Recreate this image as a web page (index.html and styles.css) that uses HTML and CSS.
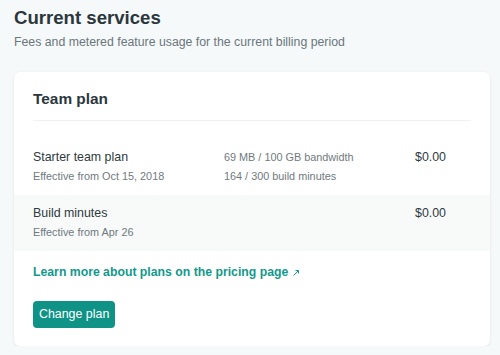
FILE: index.html
```html
<!DOCTYPE html>
<html>
<head>
<meta charset="utf-8">
<link rel="stylesheet" href="styles.css">
</head>
<body>
  <h1 class="title">Current services</h1>
  <p class="subtitle">Fees and metered feature usage for the current billing period</p>
  <section class="card">
    <h2 class="card-title">Team plan</h2>
    <div class="rows">
      <div class="row">
        <div class="col">
          <div class="name">Starter team plan</div>
          <div class="meta">Effective from Oct 15, 2018</div>
        </div>
        <div class="col usage">
          <div>69 MB / 100 GB bandwidth</div>
          <div class="second">164 / 300 build minutes</div>
        </div>
        <div class="price">$0.00</div>
      </div>
      <div class="row alt">
        <div class="col">
          <div class="name">Build minutes</div>
          <div class="meta">Effective from Apr 26</div>
        </div>
        <div class="col usage"></div>
        <div class="price">$0.00</div>
      </div>
    </div>
    <a class="link" href="#">Learn more about plans on the pricing page <svg class="ext" width="6" height="6" viewBox="0 0 6 6"><path d="M0.5 5.5 L5.5 0.5 M2.5 0.5 H5.5 V3.5" fill="none" stroke="currentColor" stroke-width="1"/></svg></a>
    <button class="btn">Change plan</button>
  </section>
</body>
</html>
```

FILE: styles.css
```css
html, body {
  margin: 0;
  padding: 0;
}
body {
  background: #f6f9fa;
  font-family: "Liberation Sans", Arial, sans-serif;
  color: #2e3a40;
  padding: 6px 10px 0 14px;
  width: 476px;
}
.title {
  margin: 0;
  font-size: 18.6px;
  line-height: 24px;
  font-weight: bold;
  color: #2b373d;
}
.subtitle {
  margin: 3px 0 0;
  font-size: 12.3px;
  line-height: 18px;
  color: #6b777d;
}
.card {
  margin-top: 21px;
  background: #fff;
  border-radius: 6px;
  box-shadow: 0 1px 3px rgba(30, 50, 60, 0.1);
  padding: 17px 0 18px;
  display: flex;
  flex-direction: column;
  align-items: flex-start;
}
.card-title {
  margin: 0 19px;
  align-self: stretch;
  font-size: 15.4px;
  line-height: 20px;
  font-weight: bold;
  padding-bottom: 11px;
  border-bottom: 1px solid #eef0f1;
  color: #2b373d;
}
.rows {
  margin-top: 18px;
  align-self: stretch;
}
.row {
  display: grid;
  grid-template-columns: 191px 191px 1fr;
  padding: 9px 19px 10px;
}
.row.alt {
  background: #f8f9f9;
}
.name {
  font-size: 12.4px;
  line-height: 18px;
  color: #2e3a40;
}
.meta {
  margin-top: 1px;
  font-size: 10.85px;
  line-height: 18px;
  color: #6f7a80;
}
.usage {
  font-size: 10.85px;
  line-height: 18px;
  color: #6f7a80;
}
.usage .second {
  margin-top: 0.5px;
}
.price {
  font-size: 12.4px;
  line-height: 18px;
  color: #2e3a40;
}
.link {
  margin: 12px 19px 0;
  font-size: 12.25px;
  line-height: 18px;
  font-weight: bold;
  color: #12998b;
  text-decoration: none;
}
.ext {
  margin-left: 1px;
  vertical-align: 0px;
}
.btn {
  margin: 20px 19px 0;
  font-family: "Liberation Sans", Arial, sans-serif;
  font-size: 12.4px;
  line-height: 18px;
  padding: 4px 6px 5px;
  border: none;
  border-radius: 4px;
  background: #0f9386;
  color: #fff;
}
```
